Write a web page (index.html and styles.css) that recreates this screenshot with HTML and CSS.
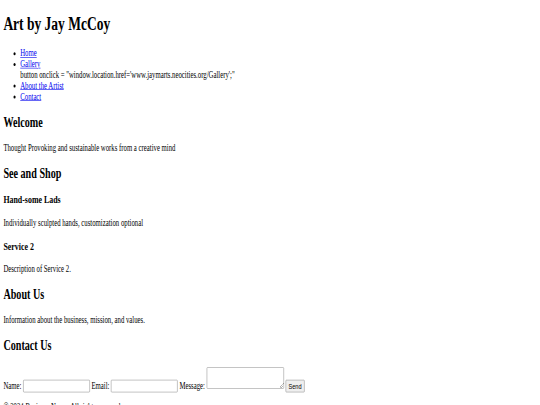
FILE: index.html
```html
<!DOCTYPE html>
<html lang="en">
<head>
<meta charset="utf-8">
<title>Art by Jay McCoy</title>
<link rel="stylesheet" href="styles.css">
</head>
<body>
<div class="page">
  <header>
    <h1>Art by Jay McCoy</h1>
    <nav>
      <ul>
        <li><a href="#home">Home</a></li>
        <li><a href="#gallery">Gallery</a><br>button onclick = "window.location.href='www.jaymarts.neocities.org/Gallery';"</li>
        <li><a href="#about">About the Artist</a></li>
        <li><a href="#contact">Contact</a></li>
      </ul>
    </nav>
  </header>
  <section>
    <h2>Welcome</h2>
    <p>Thought Provoking and sustainable works from a creative mind</p>
  </section>
  <section>
    <h2>See and Shop</h2>
    <div>
      <h3>Hand-some Lads</h3>
      <p>Individually sculpted hands, customization optional</p>
    </div>
    <div>
      <h3>Service 2</h3>
      <p>Description of Service 2.</p>
    </div>
  </section>
  <section>
    <h2>About Us</h2>
    <p>Information about the business, mission, and values.</p>
  </section>
  <section>
    <h2>Contact Us</h2>
    <form class="contact">
      <label>Name:</label> <input class="field" type="text">
      <label>Email:</label> <input class="field" type="email">
      <label>Message:</label> <textarea class="message"></textarea>
      <button class="send" type="button">Send</button>
    </form>
  </section>
  <footer>
    <p>&copy; 2024 Business Name. All rights reserved.</p>
  </footer>
</div>
</body>
</html>
```

FILE: styles.css
```css
html, body {
  margin: 0;
  overflow: hidden;
}
body {
  font-family: "Liberation Serif", serif;
  font-size: 16px;
  color: #000;
  background: #fff;
}
.page {
  display: flow-root;
  width: 1264px;
  padding: 0 8px;
  transform: scale(0.421875, 0.6);
  transform-origin: 0 0;
}
a {
  color: #0000ee;
}
.contact {
  padding-top: 3px;
}
.field, .message, .send {
  font-family: "Liberation Sans", sans-serif;
  font-size: 13.333px;
  box-sizing: border-box;
  margin: 0;
}
.field {
  width: 158px;
  height: 21px;
  padding: 1px 2px;
  border: 1px solid #8a8a8a;
  border-radius: 2px;
  background: #fff;
}
.message {
  width: 183px;
  height: 36px;
  padding: 2px;
  border: 1px solid #8a8a8a;
  border-radius: 2px;
  background: #fff;
  vertical-align: baseline;
}
.send {
  width: 45px;
  height: 21px;
  padding: 1px 6px;
  border: 1px solid #8a8a8a;
  border-radius: 2px;
  background: #efefef;
  color: #000;
}
```
